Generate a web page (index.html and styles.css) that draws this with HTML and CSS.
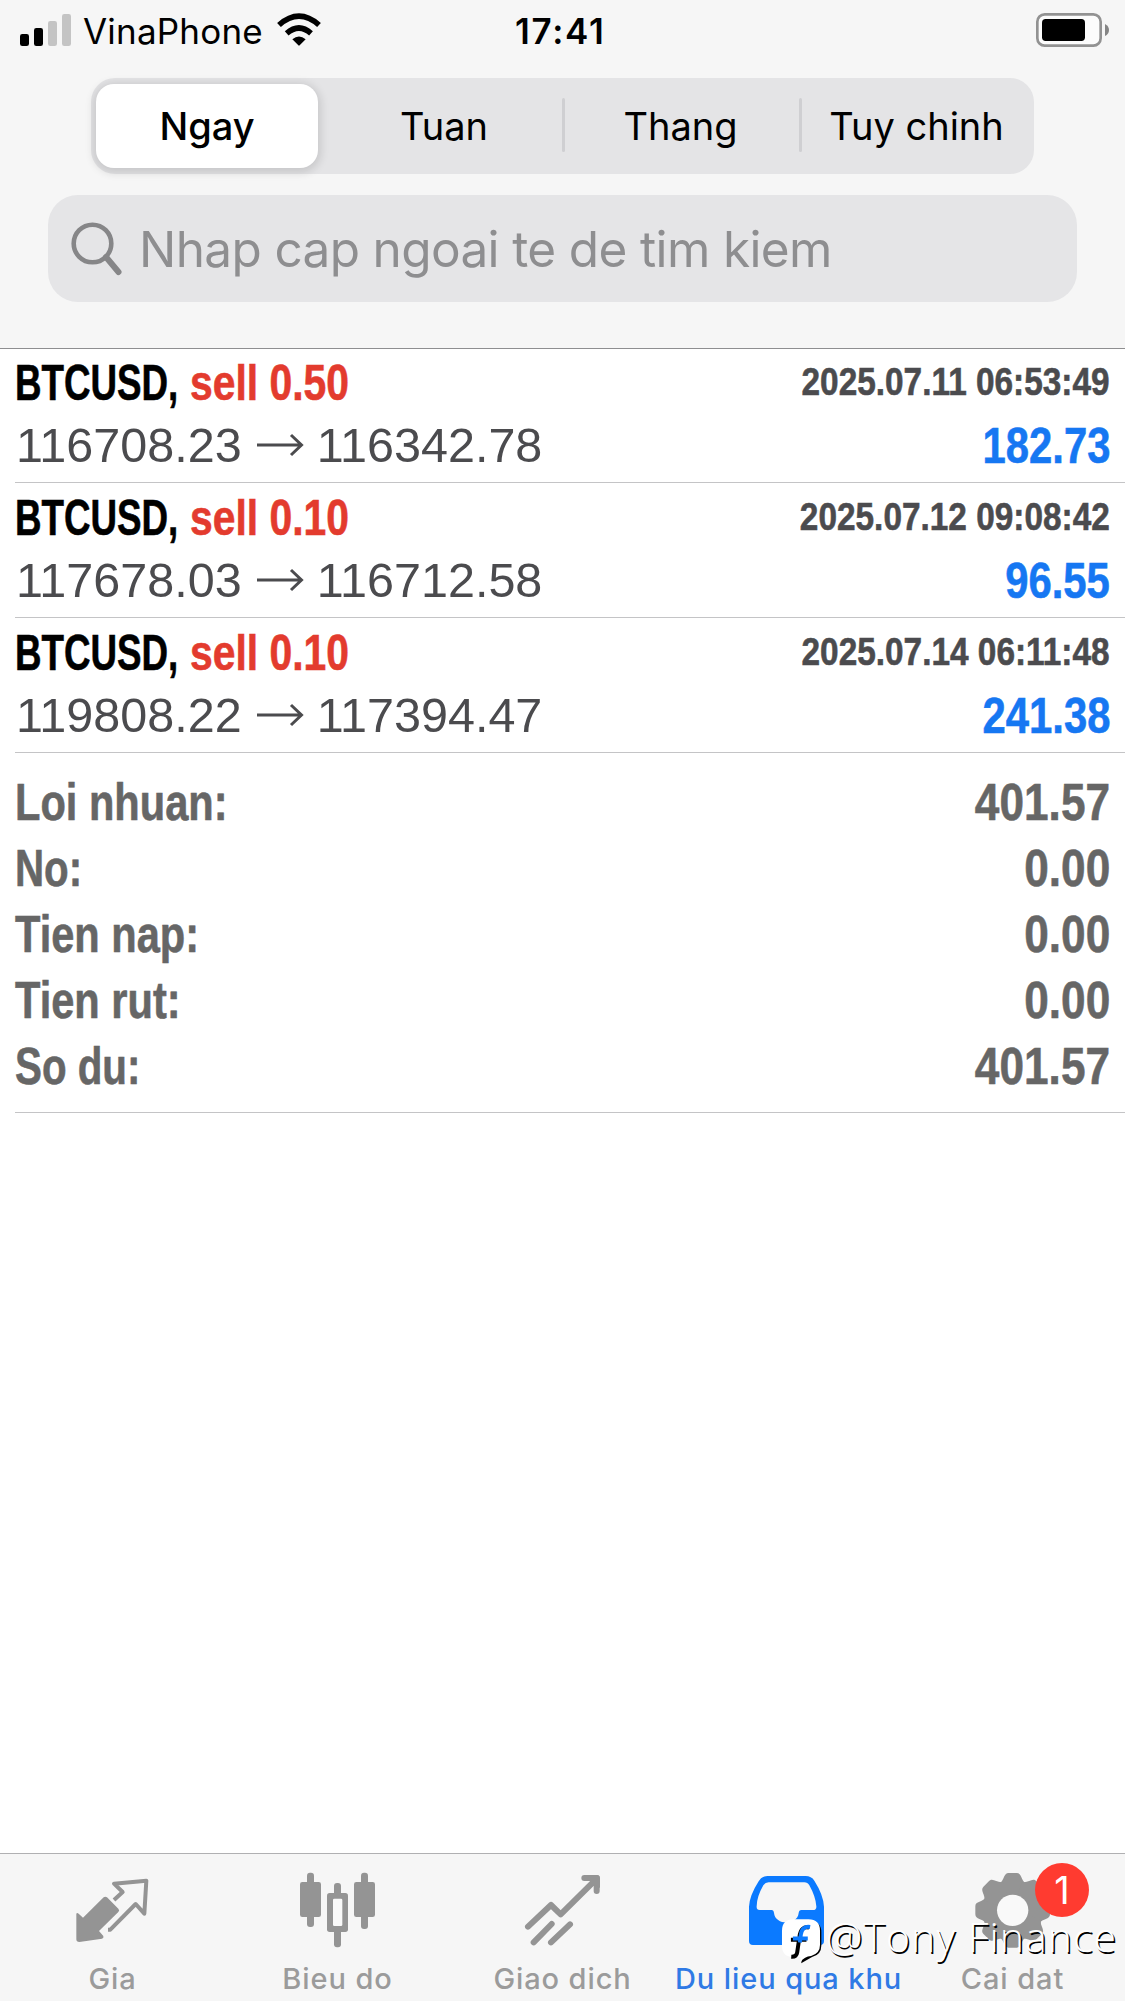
FILE: index.html
```html
<!DOCTYPE html>
<html lang="vi">
<head>
<meta charset="utf-8">
<title>Du lieu qua khu</title>
<link rel="stylesheet" href="styles.css">
</head>
<body>
<div class="app">
  <header class="header">
    <div class="status">
      <div class="status-left">
        <svg class="signal" viewBox="60 42 153 96">
          <rect x="60" y="102" width="27" height="36" rx="7"/>
          <rect x="102" y="84" width="27" height="54" rx="7"/>
          <rect class="dim" x="144" y="63" width="27" height="75" rx="7"/>
          <rect class="dim" x="186" y="42" width="27" height="96" rx="7"/>
        </svg>
        <span class="carrier">VinaPhone</span>
        <svg class="wifi" viewBox="828 36 138 102">
          <path class="arc" d="M837 75Q897 22 957 75"/>
          <path class="arc" d="M860 100Q897 68 933 100"/>
          <path d="M877 118Q897 101 917 118L899 136Q897 138 895 136Z"/>
        </svg>
      </div>
      <span class="clock">17:41</span>
      <svg class="battery" viewBox="858 39 219 102">
        <rect class="case" x="862" y="43" width="190" height="94" rx="22"/>
        <rect x="876" y="57" width="129" height="66" rx="11"/>
        <path class="cap" d="M1065 72Q1077 78 1077 90T1065 108Z"/>
      </svg>
    </div>
    <nav class="segments">
      <span class="segment selected">Ngay</span>
      <span class="segment">Tuan</span>
      <span class="segment divided">Thang</span>
      <span class="segment divided">Tuy chinh</span>
    </nav>
    <div class="search">
      <svg class="glass" viewBox="0 0 50 54">
        <circle cx="20.5" cy="21.5" r="18.8"/>
        <path d="M34 35L46.500 50"/>
      </svg>
      <span class="placeholder">Nhap cap ngoai te de tim kiem</span>
    </div>
  </header>

  <main class="content">
    <section class="trade">
      <div class="line title"><span><b class="symbol">BTCUSD,</b><b class="side">sell 0.50</b></span><b class="date">2025.07.11 06:53:49</b></div>
      <div class="line price"><span class="move"><span>116708.23</span><svg class="arrow" viewBox="0 0 46 22"><path d="M0 11H44M34 1L44.500 11L34 21"/></svg><span>116342.78</span></span><b class="profit">182.73</b></div>
    </section>
    <section class="trade">
      <div class="line title"><span><b class="symbol">BTCUSD,</b><b class="side">sell 0.10</b></span><b class="date">2025.07.12 09:08:42</b></div>
      <div class="line price"><span class="move"><span>117678.03</span><svg class="arrow" viewBox="0 0 46 22"><path d="M0 11H44M34 1L44.500 11L34 21"/></svg><span>116712.58</span></span><b class="profit">96.55</b></div>
    </section>
    <section class="trade">
      <div class="line title"><span><b class="symbol">BTCUSD,</b><b class="side">sell 0.10</b></span><b class="date">2025.07.14 06:11:48</b></div>
      <div class="line price"><span class="move"><span>119808.22</span><svg class="arrow" viewBox="0 0 46 22"><path d="M0 11H44M34 1L44.500 11L34 21"/></svg><span>117394.47</span></span><b class="profit">241.38</b></div>
    </section>
    <section class="summary">
      <div class="total"><b class="label">Loi nhuan:</b><b class="value">401.57</b></div>
      <div class="total"><b class="label tight">No:</b><b class="value">0.00</b></div>
      <div class="total"><b class="label">Tien nap:</b><b class="value">0.00</b></div>
      <div class="total"><b class="label">Tien rut:</b><b class="value">0.00</b></div>
      <div class="total"><b class="label tight">So du:</b><b class="value">401.57</b></div>
    </section>
  </main>

  <footer class="tabs">
    <div class="tab">
      <svg class="icon" viewBox="0 42 675 300">
        <path d="M311 172Q316 168 321 172L355 206Q360 211 355 216L297 273L310 288Q312 294 306 296L238 306Q229 306 229 298V221Q231 217 236 221L249 233Z"/>
        <path class="outline" d="M342 180L368 156L342 131L439 122L433 221L407 192L331 269L324 269"/>
      </svg>
      <span class="name">Gia</span>
    </div>
    <div class="tab">
      <svg class="icon" viewBox="675 42 675 300">
        <rect x="900" y="126" width="63" height="105" rx="7"/><rect x="921" y="98" width="21" height="163" rx="9"/>
        <rect x="1002" y="129" width="21" height="45" rx="9"/><rect x="1002" y="262" width="21" height="60" rx="9"/>
        <rect x="981" y="159" width="63" height="117" rx="8"/><rect class="hole" x="999" y="176" width="28" height="82" rx="4"/>
        <rect x="1062" y="126" width="63" height="105" rx="7"/><rect x="1083" y="98" width="21" height="169" rx="9"/>
      </svg>
      <span class="name">Bieu do</span>
    </div>
    <div class="tab">
      <svg class="icon" viewBox="1350 42 675 300">
        <path class="trend" d="M1584 260L1653 195L1682 223L1788 118M1753 114H1790V153M1601 307L1655 252M1653 307L1710 253"/>
        <path d="M1760 105H1790Q1800 105 1800 115V145Z"/>
      </svg>
      <span class="name">Giao dich</span>
    </div>
    <div class="tab active">
      <svg class="icon" viewBox="2025 42 675 300">
        <path fill-rule="evenodd" d="M2247 303V200Q2249 166 2276 124Q2285 108 2302 108H2417Q2434 108 2443 122Q2470 164 2472 200V303Q2472 315 2460 315H2259Q2247 315 2247 303ZM2306 127Q2296 127 2290 136Q2270 171 2270 199Q2269 210 2279 210H2315Q2321 210 2322 219C2326 257 2392 257 2396 219Q2397 210 2404 210H2439Q2450 210 2449 199Q2447 170 2428 136Q2423 127 2413 127Z"/>
      </svg>
      <span class="name">Du lieu qua khu</span>
    </div>
    <div class="tab">
      <svg class="icon" viewBox="2700 42 675 300">
        <g transform="translate(3038 211)">
          <circle r="91"/>
          <g id="teeth"><path id="tooth" d="M-40 -80C-24 -90 -28 -112 -12 -112H12C28 -112 24 -90 40 -80L0 0Z"/>
          <use href="#tooth" transform="rotate(45)"/><use href="#tooth" transform="rotate(90)"/><use href="#tooth" transform="rotate(135)"/></g>
          <use href="#teeth" transform="rotate(180)"/>
          <circle class="hole" r="47"/>
        </g>
      </svg>
      <span class="badge">1</span>
      <span class="name">Cai dat</span>
    </div>
    <div class="watermark">
      <svg class="mark" viewBox="90 232 130 140">
        <path class="mark-shadow" d="M150 244H181Q215 244 215 277V317Q215 345 187 352L154 371L157 356Z"/>
        <path class="mark-body" d="M131 238H176Q211 238 211 273V315Q211 341 184 349Q164 351 152 366V352H131Q96 352 96 317V273Q96 238 131 238Z"/>
        <path class="mark-f black" d="M178 263Q153 257 149 290L142 338Q140 352 124 351M123 300H170"/>
        <path class="mark-f blue" d="M181 261Q157 257 153 284L150 308M129 296H174"/>
      </svg>
      <span class="author">@Tony Finance</span>
    </div>
  </footer>
</div>
</body>
</html>
```
FILE: styles.css
```css
* { box-sizing: border-box; }
body { margin: 0; background: #fff; }
svg { display: block; flex: none; overflow: visible; }

.app {
  width: 1125px;
  height: 2001px;
  display: flex;
  flex-direction: column;
  overflow: hidden;
  font-family: Inter, "Liberation Sans", sans-serif;
  color: #000;
}

/* Header */
.header {
  height: 349px;
  flex: none;
  background: #f6f6f6;
  border-bottom: 1px solid #8e8e90;
}
.status {
  height: 78px;
  padding: 0 16px 15px 20px;
  display: grid;
  grid-template-columns: 495px auto 1fr;
  align-items: center;
  font-size: 35px;
  line-height: 63px;
}
.status-left { display: flex; }
.signal { width: 51px; height: 32px; margin-top: 14px; }
.signal .dim { fill: #c4c4c4; }
.carrier { margin-left: 12px; width: 193px; letter-spacing: 0.2px; }
.wifi { width: 46px; height: 34px; margin-top: 12px; }
.arc { fill: none; stroke: #000; stroke-width: 17; }
.clock { font-weight: 600; letter-spacing: 1.7px; }
.battery { width: 73px; height: 34px; justify-self: end; margin-top: -3px; }
.case { fill: #fcfcfc; stroke: #929292; stroke-width: 8; }
.cap { fill: #858585; }

.segments {
  width: 943px;
  height: 96px;
  margin: 0 auto;
  padding: 6px 0 6px 5px;
  display: grid;
  grid-template-columns: 222px 244px 237px 235px;
  background: #e4e4e6;
  border-radius: 24px;
  font-size: 38px;
  line-height: 84px;
  text-align: center;
}
.segment { position: relative; }
.selected {
  background: #fff;
  border-radius: 18px;
  font-weight: 500;
  box-shadow: 0 2px 8px 3px rgba(0, 0, 0, 0.12);
}
.segment:nth-child(2) { padding-left: 8px; }
.segment.divided::before {
  content: "";
  position: absolute;
  left: 0;
  top: 14px;
  width: 3px;
  height: 54px;
  border-radius: 2px;
  background: #cfcfd2;
}

.search {
  width: 1029px;
  height: 107px;
  margin: 21px auto 0;
  padding-left: 24px;
  display: flex;
  align-items: center;
  background: #e5e5e7;
  border-radius: 30px;
}
.glass { width: 50px; height: 54px; fill: none; stroke: #868688; stroke-width: 4.6; stroke-linecap: round; }
.glass path { stroke-width: 6; }
.placeholder { margin-left: 17px; font-size: 49.5px; letter-spacing: -0.64px; color: #8e8e90; white-space: nowrap; }

/* History rows */
.content {
  flex: 1;
  margin: -1px 0 0;
  padding-left: 15px;
  font-family: "Liberation Sans", Arial, sans-serif;
}
.content b { -webkit-text-stroke: 0.6px currentColor; }
.trade { height: 135px; padding-right: 15px; border-bottom: 1px solid #c4c4c6; }
.line, .total { display: flex; justify-content: space-between; white-space: nowrap; }
.title { height: 68px; font-size: 49.5px; line-height: 70px; }
.symbol { display: inline-block; width: 175px; transform: scaleX(0.742); transform-origin: 0 50%; }
.side { display: inline-block; color: #e33b2e; transform: scaleX(0.825); transform-origin: 0 50%; }
.date { font-size: 39.5px; line-height: 67px; color: #4b4b4e; transform: scaleX(0.845); transform-origin: 100% 50%; }
.price { height: 58px; font-size: 48.5px; line-height: 59px; color: #4b4b4e; }
.move { display: flex; align-items: center; padding-left: 1px; }
.arrow { width: 46px; height: 22px; margin: 0 14px 0 15px; fill: none; stroke: #4b4b4e; stroke-width: 3; }
.profit { font-size: 49.5px; color: #1677f2; transform: scaleX(0.845); transform-origin: 100% 50%; }

.summary { height: 360px; padding: 16px 15px 0 0; border-bottom: 1px solid #c4c4c6; }
.total { height: 66px; font-size: 52px; line-height: 66px; color: #666; }
.label { transform: scaleX(0.8); transform-origin: 0 50%; }
.label.tight { transform: scaleX(0.775); }
.value { transform: scaleX(0.85); transform-origin: 100% 50%; }

/* Tab bar */
.tabs {
  position: relative;
  height: 148px;
  flex: none;
  display: grid;
  grid-template-columns: repeat(5, 225px);
  background: #f6f6f6;
  border-top: 1px solid #b0b0b2;
}
.tab { position: relative; color: #949494; text-align: center; }
.active { color: #0b7aff; }
.icon { width: 225px; height: 100px; fill: currentColor; }
.outline { fill: none; stroke: currentColor; stroke-width: 12; stroke-linejoin: round; }
.trend { fill: none; stroke: currentColor; stroke-width: 18; stroke-linecap: round; stroke-linejoin: round; }
.hole { fill: #f9f9f9; }
.name {
  display: block;
  height: 47px;
  font-size: 29px;
  line-height: 49px;
  font-weight: 500;
  letter-spacing: 0.9px;
  color: #9b9b9b;
  white-space: nowrap;
}
.active .name { color: #2f7ae5; }
.badge {
  position: absolute;
  left: 135px;
  top: 9px;
  width: 54px;
  height: 54px;
  border-radius: 50%;
  background: #ff3b30;
  color: #fff;
  font-size: 38px;
  line-height: 54px;
}

.watermark { position: absolute; left: 780px; top: 63px; display: flex; }
.mark { width: 43px; height: 47px; }
.mark-body { fill: #fff; }
.mark-shadow { fill: #000; }
.mark-f { fill: none; stroke-width: 12; }
.black { stroke: #000; }
.blue { stroke: #0b7aff; }
.author {
  margin: -2px 0 0 3px;
  font-family: "Open Sans", "Noto Sans", sans-serif;
  font-weight: 300;
  font-size: 41px;
  line-height: 42px;
  letter-spacing: 1.05px;
  color: #fff;
  text-shadow: 1.5px 1.5px 0 #000;
  white-space: nowrap;
}
```
